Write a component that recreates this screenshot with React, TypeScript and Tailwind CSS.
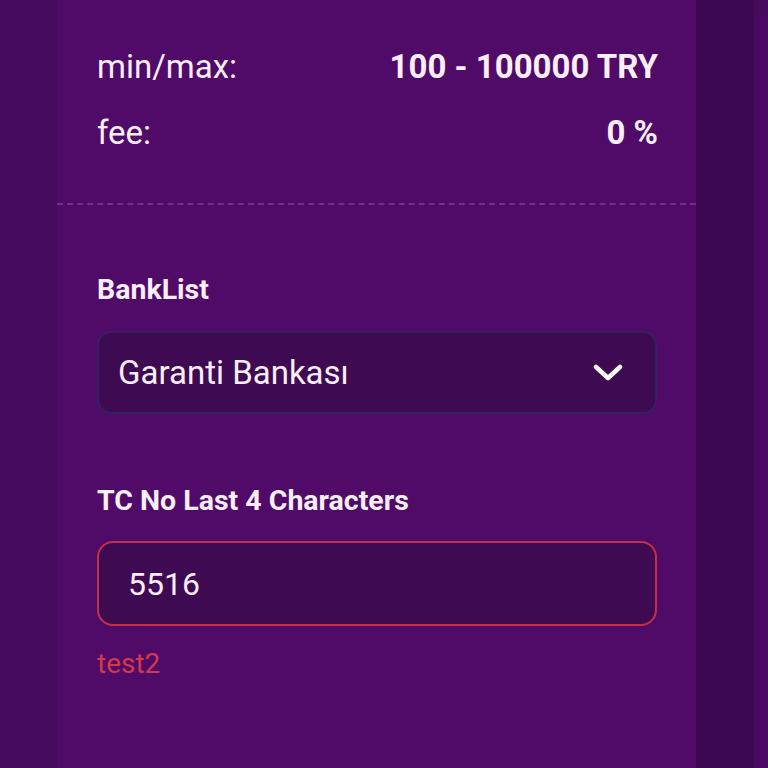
import React from "react";

const rows = [
  { label: "min/max:", value: "100 - 100000 TRY" },
  { label: "fee:", value: "0 %" },
];

function Chevron() {
  return (
    <svg width="30" height="18" viewBox="0 0 30 18" fill="none">
      <polyline
        points="3,3 15,14 27,3"
        stroke="#ffffff"
        strokeWidth="4.5"
        strokeLinecap="round"
        strokeLinejoin="round"
      />
    </svg>
  );
}

export default function App() {
  return (
    <div
      className="flex h-[768px] w-full overflow-hidden bg-[#450b5c] text-[#fbeefb]"
      style={{ fontFamily: "Roboto, 'Noto Sans', sans-serif" }}
    >
      <div className="w-[57px] shrink-0 bg-[#450b5c]" />

      <div className="w-[639px] shrink-0 bg-[#4f0b67]">
        {/* limits */}
        <div className="pl-[40px] pr-[38px] pt-[34px]">
          {rows.map((row) => (
            <div key={row.label} className="flex h-[66px] items-center justify-between">
              <span className="text-[33px]">{row.label}</span>
              <span className="text-[33px] font-bold">{row.value}</span>
            </div>
          ))}
        </div>

        <div className="mt-[37px] border-t-2 border-dashed border-[#6f2f8a]" />

        {/* form */}
        <div className="pl-[40px] pr-[39px] pt-[67px]">
          <div className="text-[28.5px] font-bold leading-[36px]">BankList</div>
          <div className="mt-[23px] flex h-[83px] items-center justify-between rounded-[14px] border-2 border-[#33225f] bg-[#3e0a52] pl-[19px] pr-[32px]">
            <span className="text-[33px]">Garanti Bankası</span>
            <Chevron />
          </div>

          <div className="mt-[69px] text-[28.5px] font-bold leading-[36px]">
            TC No Last 4 Characters
          </div>
          <div className="mt-[22px] flex h-[85px] items-center rounded-[16px] border-2 border-[#c62f4a] bg-[#3e0a52] pl-[29px]">
            <span className="text-[32px]">5516</span>
          </div>
          <div className="mt-[20px] text-[28px] leading-[36px] text-[#d33a4c]">test2</div>
        </div>
      </div>

      <div className="w-[58px] shrink-0 bg-[#3c0852]" />
      <div className="flex-1 pt-[14px]">
        <div className="h-full bg-[#4a0a61]" />
      </div>
    </div>
  );
}
